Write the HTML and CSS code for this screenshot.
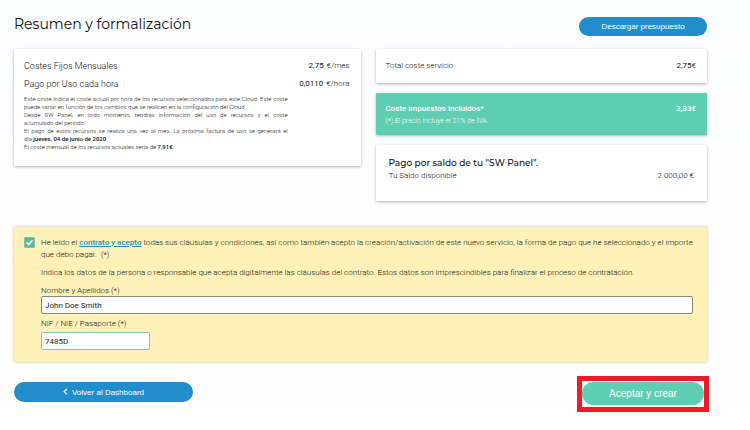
FILE: index.html
```
<!DOCTYPE html>
<html lang="es">
<head>
<meta charset="UTF-8">
<title>Resumen y formalización</title>
<link rel="stylesheet" href="styles.css">
</head>
<body>
<div class="page">
  <header class="header">
    <h1>Resumen y formalización</h1>
    <button type="button" class="btn btn-download">Descargar presupuesto</button>
  </header>

  <div class="summary">
    <section class="card costs">
      <div class="row big"><span>Costes Fijos Mensuales</span><span class="price"><b>2,75</b> €/mes</span></div>
      <div class="row big"><span>Pago por Uso cada hora</span><span class="price"><b>0,0110</b> €/hora</span></div>
      <div class="note">
        <p>Este coste indica el coste actual por hora de los recursos seleccionados para este Cloud. Este coste puede variar en función de los cambios que se realicen en la configuración del Cloud.</p>
        <p>Desde SW Panel, en todo momento, tendrás información del uso de recursos y el coste acumulado&nbsp;del&nbsp;período.</p>
        <p>El pago de estos recursos se realiza una vez al mes. La próxima factura de uso se generará el día&nbsp;<b>jueves, 04 de junio de 2020</b>.</p>
        <p>El coste mensual de los recursos actuales sería de <b>7,91€</b>.</p>
      </div>
    </section>

    <div class="totals">
      <section class="card total">
        <div class="row"><span>Total coste servicio</span><span class="price"><b>2,75</b>€</span></div>
      </section>
      <section class="card taxes">
        <div class="row"><b>Coste impuestos incluidos*</b><b>3,33€</b></div>
        <p class="small">(*) El precio incluye el 21% de IVA.</p>
      </section>
      <section class="card balance">
        <h2>Pago por saldo de tu "SW Panel".</h2>
        <div class="row"><span>Tu Saldo disponible</span><span>2.000,00 €</span></div>
      </section>
    </div>
  </div>

  <form class="contract" id="contract">
    <input type="checkbox" id="accept" class="check" checked>
    <div class="fields">
      <label class="terms" for="accept">He leído el <a href="#contrato">contrato y acepto</a> todas sus cláusulas y condiciones, así como también acepto la creación/activación de este nuevo servicio, la forma de pago que he seleccionado y el importe que debo pagar. &nbsp;(*)</label>
      <p class="hint">Indica los datos de la persona o responsable que acepta digitalmente las cláusulas del contrato. Estos datos son imprescindibles para finalizar el proceso de contratación.</p>
      <label class="field-label" for="name">Nombre y Apellidos (*)</label>
      <input type="text" id="name" class="text" value="John Doe Smith">
      <label class="field-label nif-label" for="nif">NIF / NIE / Pasaporte (*)</label>
      <input type="text" id="nif" class="text nif" value="7485D">
    </div>
  </form>

  <footer class="footer">
    <button type="button" class="btn btn-back">
      <svg width="5" height="8" viewBox="0 0 5 8" aria-hidden="true"><path d="M4 1L1.200 3.600L4 6.400" fill="none" stroke="#fff" stroke-width="1.200"/></svg>
      Volver al Dashboard
    </button>
    <div class="highlight"><button type="submit" form="contract" class="btn btn-accept">Aceptar y crear</button></div>
  </footer>
</div>
</body>
</html>
```

FILE: styles.css
```
* { box-sizing: border-box; }
body {
  margin: 0;
  min-height: 100vh;
  background: linear-gradient(#fbfcfe, #fff);
  font-family: Roboto, "Liberation Sans", sans-serif;
  font-size: 8px;
  font-weight: 300;
  line-height: 12px;
  color: #111;
}
h1, h2, p { margin: 0; }
h1, h2 { font-family: Montserrat, Inter, sans-serif; }
h1 { font-size: 14px; font-weight: 400; line-height: 18px; }
h2 { font-size: 9px; font-weight: 500; line-height: 14px; }
b { font-weight: 500; }

.page { padding: 15px 43px 18px 14px; }
.header { display: flex; justify-content: space-between; align-items: flex-start; height: 34px; }
.btn {
  border: 0;
  border-radius: 18px;
  background: #218ecb;
  color: #fff;
  font-family: "Liberation Sans", Arial, sans-serif;
  font-size: 8px;
}
.btn-download { width: 128px; height: 19px; margin-top: 2px; }

.summary { display: grid; grid-template-columns: 346fr 331fr; gap: 15px; align-items: start; }
.card { background: #fff; border-radius: 1px; box-shadow: 0 1px 3px rgba(0, 0, 0, .3); padding: 10px 11px 10px 10px; }
.row { display: flex; justify-content: space-between; }
.costs { min-height: 117px; }
.big { font-size: 9px; line-height: 14px; margin-bottom: 4px; }
.price { font-size: 8px; }
.price b { font-weight: 400; }
.big .price b { margin-right: 1px; }
.note { width: 81%; font-size: 6px; line-height: 8px; text-align: justify; }

.totals { display: grid; gap: 10px; }
.total { min-height: 34px; padding-top: 11px; }
.taxes { min-height: 42px; padding-bottom: 8px; background: #5fcdb2; color: #fff; }
.small { font-size: 7px; }
.balance { min-height: 56px; padding: 11px 13px; }

.contract {
  display: flex;
  margin-top: 26px;
  padding: 10px 14px 12px 10px;
  background: #fff1b8;
  border-radius: 1px;
  box-shadow: 0 0 3px rgba(0, 0, 0, .3);
}
.check {
  appearance: none;
  flex: none;
  width: 11px;
  height: 11px;
  margin: 0 6px 0 0;
  border: 1px solid #8abfa9;
  border-radius: 1px;
  background: #4fb9a5 url("data:image/svg+xml,%3Csvg xmlns='http://www.w3.org/2000/svg' viewBox='0 0 9 9'%3E%3Cpath d='M1.500 4.500L3.600 6.500L7.500 2.300' fill='none' stroke='white' stroke-width='1.600'/%3E%3C/svg%3E") center / 9px 9px no-repeat;
}
.fields { flex: 1; }
.terms { display: block; }
.terms a { color: #218ecb; font-weight: 500; }
.hint { margin: 6px 0 7px; }
.field-label { display: block; line-height: 10px; }
.text {
  display: block;
  width: 100%;
  height: 18px;
  padding: 0 3px;
  border: 1px solid #8b8877;
  border-radius: 2px;
  background: #fff;
  color: #222;
  font: 400 8px Roboto, sans-serif;
}
.nif-label { margin: 5px 0 3px; }
.nif { width: 109px; border-color: #8fc0bd; }

.footer { display: flex; justify-content: space-between; align-items: flex-start; margin: 14px -2px 0 0; }
.btn-back { display: flex; align-items: center; justify-content: center; gap: 4px; width: 179px; height: 20px; margin-top: 6px; }
.highlight { width: 132px; border: 5px solid #ed1c24; background: #fff; padding: 1px 0 2px; }
.btn-accept { display: block; width: 100%; height: 23px; background: #5fcdb2; font-size: 10px; }
```
